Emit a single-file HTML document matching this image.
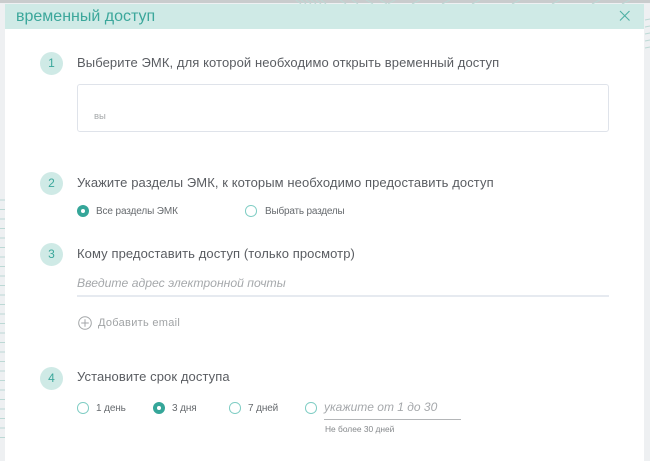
<!DOCTYPE html>
<html lang="ru"><head><meta charset="utf-8"><style>
html,body{margin:0;padding:0;background:#fff}
#p{position:relative;width:650px;height:461px;overflow:hidden;background:#eef0f2;font-family:"Liberation Sans",sans-serif;color:#55585c}
#p div,#p svg{position:absolute}
.t{white-space:nowrap;line-height:16px}
.q{font-size:13px;color:#5a5d62;letter-spacing:.09px}
.s{font-size:10px;color:#666a6e;letter-spacing:-.12px}
.n{left:40px;width:23px;height:23px;border-radius:50%;background:#cfeae6;color:#3ba79b;font-size:12px;line-height:23px;text-align:center}
.r{width:9.6px;height:9.6px;border:1.2px solid #7fcdc4;border-radius:50%;background:#fff}
.c{width:12px;height:12px;border-radius:50%;background:#35a699}
.c:after{content:"";position:absolute;left:4px;top:4px;width:4px;height:4px;border-radius:50%;background:#fff}
</style></head><body><div id="p">
<div style="left:0;top:0;width:650px;height:3px;background:#c9cccd"></div>
<svg style="left:0;top:0" width="650" height="461" fill="none" stroke="#bcd9d5" stroke-width="1">
<path d="M296 0l5 4M301 0l5 4M306 0l5 4M311 0l5 4M316 0l5 4M321 0l5 4M340 0l6 4M352 0l6 4M366 0l7 4M380 0l7 4M395 0l-7 4M420 0l-8 4M450 0l-8 4M480 0l-8 4M520 0l-8 4M560 0l-8 4M600 0l-8 4M630 0l-8 4"/>
<path d="M645 20l5-1M645 27l5-1M645 34l5-1M645 41l5-1M645 48l5-1"/>
<path d="M0 200h5M0 209.500h5M0 219h5M0 228.500h5M0 238h5M0 247.500h5M0 257h5M0 266.500h5M0 276h5M0 285.500h5M0 295h5M0 304.500h5M0 314h5M0 323.500h5M0 333h5M0 342.500h5M0 352h5M0 361.500h5M0 371h5M0 380.500h5M0 390h5M0 399.500h5M0 409h5M0 418.500h5M0 428h5M0 437.500h5"/>
</svg>
<div style="left:5px;top:4px;width:639px;height:457px;background:#fff"></div>
<div style="left:5px;top:4px;width:639px;height:25px;background:#cfeae6"></div>
<div class="t" style="left:16px;top:8px;font-size:16px;line-height:18px;color:#3ba79b">временный доступ</div>
<svg style="left:619px;top:10px" width="12" height="12" fill="none" stroke="#4fb0a5" stroke-width="1.1"><path d="M1 1l9.500 9.500M10.500 1L1 10.500"/></svg>

<div class="n" style="top:52px">1</div>
<div class="t q" style="left:77px;top:55px">Выберите ЭМК, для которой необходимо открыть временный доступ</div>
<div style="left:77px;top:84px;width:530px;height:46px;border:1px solid #dfe3ea;border-radius:3px;background:#fff"></div>
<div class="t" style="left:94px;top:109px;font-size:9.500px;color:#a5a8aa">вы</div>

<div class="n" style="top:172px">2</div>
<div class="t q" style="left:77px;top:175px">Укажите разделы ЭМК, к которым необходимо предоставить доступ</div>
<div class="c" style="left:76.500px;top:205px"></div>
<div class="t s" style="left:96px;top:204px">Все разделы ЭМК</div>
<div class="r" style="left:245px;top:205px"></div>
<div class="t s" style="left:265px;top:204px;letter-spacing:-.2px">Выбрать разделы</div>

<div class="n" style="top:243px">3</div>
<div class="t q" style="left:77px;top:246px">Кому предоставить доступ (только просмотр)</div>
<div class="t" style="left:77px;top:275px;font-size:12.200px;font-style:italic;color:#a5a8ab">Введите адрес электронной почты</div>
<div style="left:77px;top:295px;width:532px;height:2px;background:#e6eaf0"></div>
<svg style="left:78px;top:316px" width="14" height="14" fill="none" stroke="#a3a6a8" stroke-width="1"><circle cx="7" cy="7" r="6.300"/><path d="M7 3.200v7.600M3.200 7h7.600"/></svg>
<div class="t" style="left:98px;top:315px;font-size:11px;letter-spacing:.3px;color:#a0a3a5">Добавить email</div>

<div class="n" style="top:367px">4</div>
<div class="t q" style="left:77px;top:369px">Установите срок доступа</div>
<div class="r" style="left:77px;top:402px"></div>
<div class="t s" style="left:96px;top:401px">1 день</div>
<div class="c" style="left:153px;top:402px"></div>
<div class="t s" style="left:172px;top:401px">3 дня</div>
<div class="r" style="left:229px;top:402px"></div>
<div class="t s" style="left:248px;top:401px">7 дней</div>
<div class="r" style="left:305px;top:402px"></div>
<div class="t" style="left:324px;top:399px;font-size:12px;font-style:italic;color:#a5a8ab">укажите от 1 до 30</div>
<div style="left:324px;top:419px;width:137px;height:1px;background:#b4b6b8"></div>
<div class="t" style="left:325px;top:421px;font-size:8.400px;color:#85888b">Не более 30 дней</div>
</div></body></html>
